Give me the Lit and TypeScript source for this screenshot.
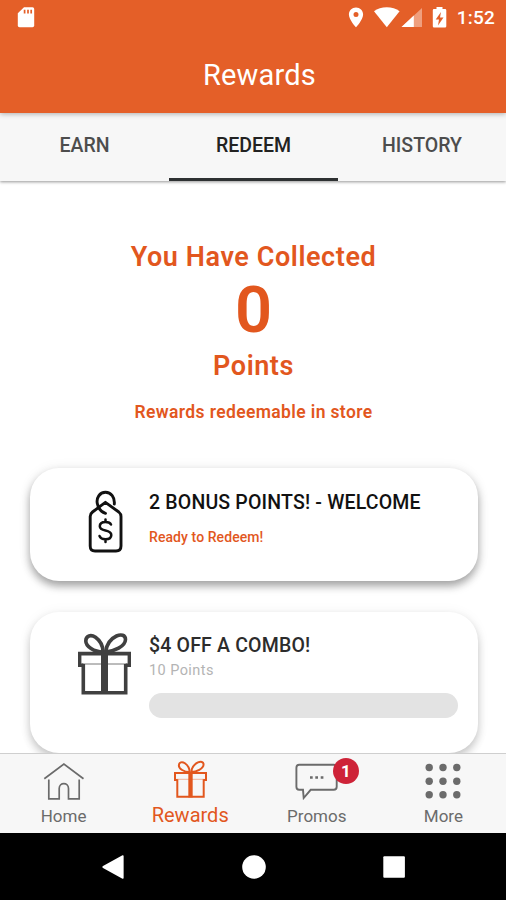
import { LitElement, html, css, svg } from "lit";
import { customElement, property, state } from "lit/decorators.js";
import { classMap } from "lit/directives/class-map.js";

const giftIcon = svg`
  <path d="M5.3 32.2H1.6V20.6H51.4V32.2H47.7M5.3 31V59.8H47.7V31" />
  <path d="M4 31H49" stroke-width="1" opacity=".7" />
  <path d="M26.5 19V61" stroke-width="7" />
  <path d="M25 19C16 19 7.800 13.500 7.800 8C7.800 2.500 13 1.300 17.500 4.300C22 7.500 25 13 25 19Z" />
  <path d="M27.500 19C36 18.500 47.300 13.500 47.500 6.500C47.500 1.900 43 1 38.500 3C32 6 28.500 12.500 27.500 19Z" />
`;

@customElement("reward-card")
class RewardCard extends LitElement {
  @property() heading = "";
  @property() note = "";
  @property() icon = "tag";
  @property({ type: Boolean }) ready = false;

  static styles = css`
    :host { display: block; }
    .card {
      box-sizing: border-box; display: flex; height: 140.5px; padding: 21px 20px 0 48px;
      border-radius: 29px; background: #fff;
      box-shadow: 0 5px 9px rgba(0,0,0,.2), 0 1px 14px rgba(0,0,0,.06);
    }
    .card.ready { height: 113px; padding-top: 21.5px; box-shadow: 0 5px 8px rgba(0,0,0,.34), 0 1px 14px rgba(0,0,0,.07); }
    .icon { width: 53px; flex: none; margin-right: 18px; display: flex; justify-content: center; align-items: flex-start; color: #404040; }
    .ready .icon { color: #111; }
    svg { display: block; fill: none; stroke: currentColor; }
    .gift { stroke-width: 3.6; }
    .tag { stroke-width: 2.9; stroke-linecap: round; stroke-linejoin: round; margin-left: 2px; }
    .body { flex: 1; }
    .heading { font-size: 19.500px; line-height: 25px; font-weight: 500; letter-spacing: .18px; color: #2c2c2c; white-space: nowrap; }
    .ready .heading { color: #111; }
    .note { margin-top: 2.500px; font-size: 14.500px; line-height: 20px; color: #b4b4b4; letter-spacing: .43px; }
    .ready .note { margin-top: 12.500px; font-size: 14px; font-weight: 500; color: #e2571e; letter-spacing: .08px; }
    .bar { margin-top: 12px; height: 25px; border-radius: 13px; background: #e3e3e3; }
  `;

  render() {
    return html`
      <div class=${classMap({ card: true, ready: this.ready })}>
        <div class="icon">
          ${this.icon === "tag"
            ? html`<svg class="tag" width="36" height="63" viewBox="0 0 36 63">
                <path d="M17.400 12.300L30.800 22Q33 23.800 33 26.500V56Q33 61 28 61H7Q2.200 61 2.200 56V26.500Q2.200 23.800 4.500 22Z" />
                <path d="M26.300 14C27 7.500 23 2.300 17.500 2.300C11.500 2.300 8.200 8 9.300 13.500C10.300 18.500 13 22 17.500 23.300" />
                <path d="M23 34.500C22 32.300 20 32 17.500 32C14 32 11.800 33.700 11.800 36.300C11.800 42.500 23.300 38.500 23.300 45C23.300 48 21 49.300 17.500 49.300C14 49.300 12.300 48 11.500 46M17.500 29.500V32M17.500 49.300V52" stroke-width="2.500" />
              </svg>`
            : html`<svg class="gift" width="53" height="62" viewBox="0 0 53 62">${giftIcon}</svg>`}
        </div>
        <div class="body">
          <div class="heading">${this.heading}</div>
          <div class="note">${this.note}</div>
          ${this.ready ? "" : html`<div class="bar"></div>`}
        </div>
      </div>`;
  }
}

@customElement("app-root")
class AppRoot extends LitElement {
  @state() private tab = "REDEEM";

  static styles = css`
    :host {
      display: flex; flex-direction: column; width: 506px; height: 900px; overflow: hidden;
      background: #fff; font-family: Roboto, "Liberation Sans", sans-serif;
    }
    svg { display: block; }
    .header { position: relative; z-index: 2; height: 113px; flex: none; background: #e45f28; color: #fff; box-shadow: 0 1px 5px rgba(0,0,0,.3); }
    .status { display: flex; align-items: center; height: 36px; padding: 0 11px 0 17px; }
    .status .right { margin-left: auto; }
    .clock { font-size: 19px; font-weight: 500; line-height: 36px; margin-left: 10px; letter-spacing: .2px; }
    .title { padding-left: 13px; text-align: center; font-size: 29px; line-height: 79px; letter-spacing: .2px; }
    .tabs { position: relative; z-index: 1; display: grid; grid-template-columns: 169px 169px 168px; height: 68px; flex: none; background: #f7f7f7; box-shadow: 0 1px 3px rgba(0,0,0,.42); }
    .tab { box-sizing: border-box; height: 68px; border-bottom: 3px solid transparent; text-align: center; font-size: 19.500px; line-height: 66px; font-weight: 500; color: #4d4d4d; }
    .tab.active { color: #222; border-bottom-color: #2e3132; }
    .content { flex: 1; min-height: 0; overflow: hidden; padding: 60px 28.500px 0 30px; }
    .hero { text-align: center; color: #e2571e; font-weight: 600; margin-bottom: 44px; padding-right: .5px; }
    .lead { font-size: 27px; line-height: 32px; letter-spacing: .58px; }
    .count { font-size: 65px; line-height: 74px; font-weight: 600; }
    .unit { font-size: 27px; line-height: 40px; margin-top: -1px; letter-spacing: .55px; }
    .hint { font-size: 17.500px; line-height: 24px; margin-top: 14px; letter-spacing: .37px; }
    .cards { display: flex; flex-direction: column; gap: 31px; }
    .nav { position: relative; box-sizing: border-box; display: grid; grid-template-columns: repeat(4, 126.600px); height: 80px; flex: none; padding-left: .3px; border-top: 1.500px solid #cfcfcf; background: #f7f7f7; color: #6b6b6b; }
    .item { display: flex; flex-direction: column; align-items: center; font-size: 17px; line-height: 22px; }
    .glyph { position: relative; height: 50.500px; }
    .glyph svg { fill: none; stroke: currentColor; }
    .item.active { color: #e2571e; font-size: 20px; }
    .item.active .glyph { height: 50px; }
    .badge { position: absolute; left: 37.500px; top: 3.500px; width: 26px; height: 26px; border-radius: 50%; background: #ce2338; color: #fff; font-size: 17px; line-height: 26px; font-weight: 700; text-align: center; }
    .system { display: flex; justify-content: center; align-items: center; gap: 116.500px; height: 67px; flex: none; padding-left: 1px; background: #000; }
  `;

  render() {
    return html`
      <header class="header">
        <div class="status">
          <svg width="18" height="36" viewBox="0 0 18 36">
            <path fill="#fff" d="M7 7.300H15.500Q17.200 7.300 17.200 9V25.500Q17.200 27.200 15.500 27.200H2.500Q.800 27.200.800 25.500V13.300Z" />
            <path d="M7.600 9.800V13.500M11 9.800V13.500M14.200 9.800V13.500" stroke="#e45f28" stroke-width="1.700" />
          </svg>
          <svg class="right" width="100" height="36" viewBox="347 0 100 36">
            <path fill="#fff" fill-rule="evenodd" d="M356 7.400C352 7.400 348.900 10.500 348.900 14.400C348.900 19.600 356 27.300 356 27.300S363.100 19.600 363.100 14.400C363.100 10.500 360 7.400 356 7.400ZM356 12A2.500 2.500 0 1 1 356 17A2.500 2.500 0 0 1 356 12Z" />
            <path fill="#fff" d="M374 11.300C380.500 5.800 393 5.800 399.600 11.300L386.800 27.200Z" />
            <path fill="#fff" opacity=".4" d="M422 8V27H401.500Z" />
            <path fill="#fff" d="M413.800 15.600V27H401.500Z" />
            <path fill="#fff" d="M436.500 9V7H442.500V9H445Q446.300 9 446.300 10.300V26.300Q446.300 27.600 445 27.600H434Q432.800 27.600 432.800 26.300V10.300Q432.800 9 434 9Z" />
            <path fill="#e45f28" d="M441 12L435.700 19.500H439L438 25.500L443.500 17.500H440Z" />
          </svg>
          <div class="clock">1:52</div>
        </div>
        <div class="title">Rewards</div>
      </header>
      <nav class="tabs">
        ${["EARN", "REDEEM", "HISTORY"].map(
          (t) => html`<div class=${classMap({ tab: true, active: t === this.tab })} @click=${() => (this.tab = t)}>${t}</div>`
        )}
      </nav>
      <main class="content">
        <section class="hero">
          <div class="lead">You Have Collected</div>
          <div class="count">0</div>
          <div class="unit">Points</div>
          <div class="hint">Rewards redeemable in store</div>
        </section>
        <section class="cards">
          <reward-card ready icon="tag" heading="2 BONUS POINTS! - WELCOME" note="Ready to Redeem!"></reward-card>
          <reward-card icon="gift" heading="$4 OFF A COMBO!" note="10 Points"></reward-card>
        </section>
      </main>
      <nav class="nav">
        <div class="item">
          <div class="glyph">
            <svg width="42" height="50" viewBox="43 754.500 42 50" stroke-width="1.700">
              <path d="M44.300 779.300L63.900 764.500L83.500 779.300M48.800 780V799.300H59.200V789C59.200 782.500 68.500 782.500 68.500 789V799.300H79.200V780" />
            </svg>
          </div>
          Home
        </div>
        <div class="item active">
          <div class="glyph">
            <svg width="33" height="44" viewBox="0 -11 53 73" preserveAspectRatio="none" stroke-width="3.200">${giftIcon}</svg>
          </div>
          Rewards
        </div>
        <div class="item">
          <div class="glyph">
            <svg width="43" height="50" viewBox="295.300 754.500 43 50" stroke-width="1.900">
              <path d="M299.500 765.200H334Q337 765.200 337 768.200V787.300Q337 790.300 334 790.300H311L304 798.500L303.300 790.300H299.500Q296.700 790.300 296.700 787.300V768.200Q296.700 765.200 299.500 765.200Z" />
              <path d="M310.300 778H313M315.600 778H318.300M321 778H323.700" stroke-width="2.400" />
            </svg>
            <span class="badge">1</span>
          </div>
          Promos
        </div>
        <div class="item">
          <div class="glyph">
            <svg width="40" height="50" viewBox="423.500 754.500 40 50">
              ${[768, 781.7, 795.3].map((y) => [429.7, 443.5, 457.3].map((x) => svg`<circle cx=${x} cy=${y} r="3.700" fill="currentColor" stroke="none" />`))}
            </svg>
          </div>
          More
        </div>
      </nav>
      <footer class="system">
        <svg width="24" height="24" viewBox="0 0 24 24"><path fill="#fff" d="M1.300 12Q1.300 11.500 2 11L21.500.300Q22.600 0 22.600 1V23Q22.600 24 21.500 23.700L2 13Q1.300 12.500 1.300 12Z" /></svg>
        <svg width="24" height="24" viewBox="0 0 24 24"><circle cx="12" cy="12" r="11.800" fill="#fff" /></svg>
        <svg width="24" height="24" viewBox="0 0 24 24"><rect x="1.300" y="1.200" width="21.600" height="21.600" rx="1" fill="#fff" /></svg>
      </footer>
    `;
  }
}
